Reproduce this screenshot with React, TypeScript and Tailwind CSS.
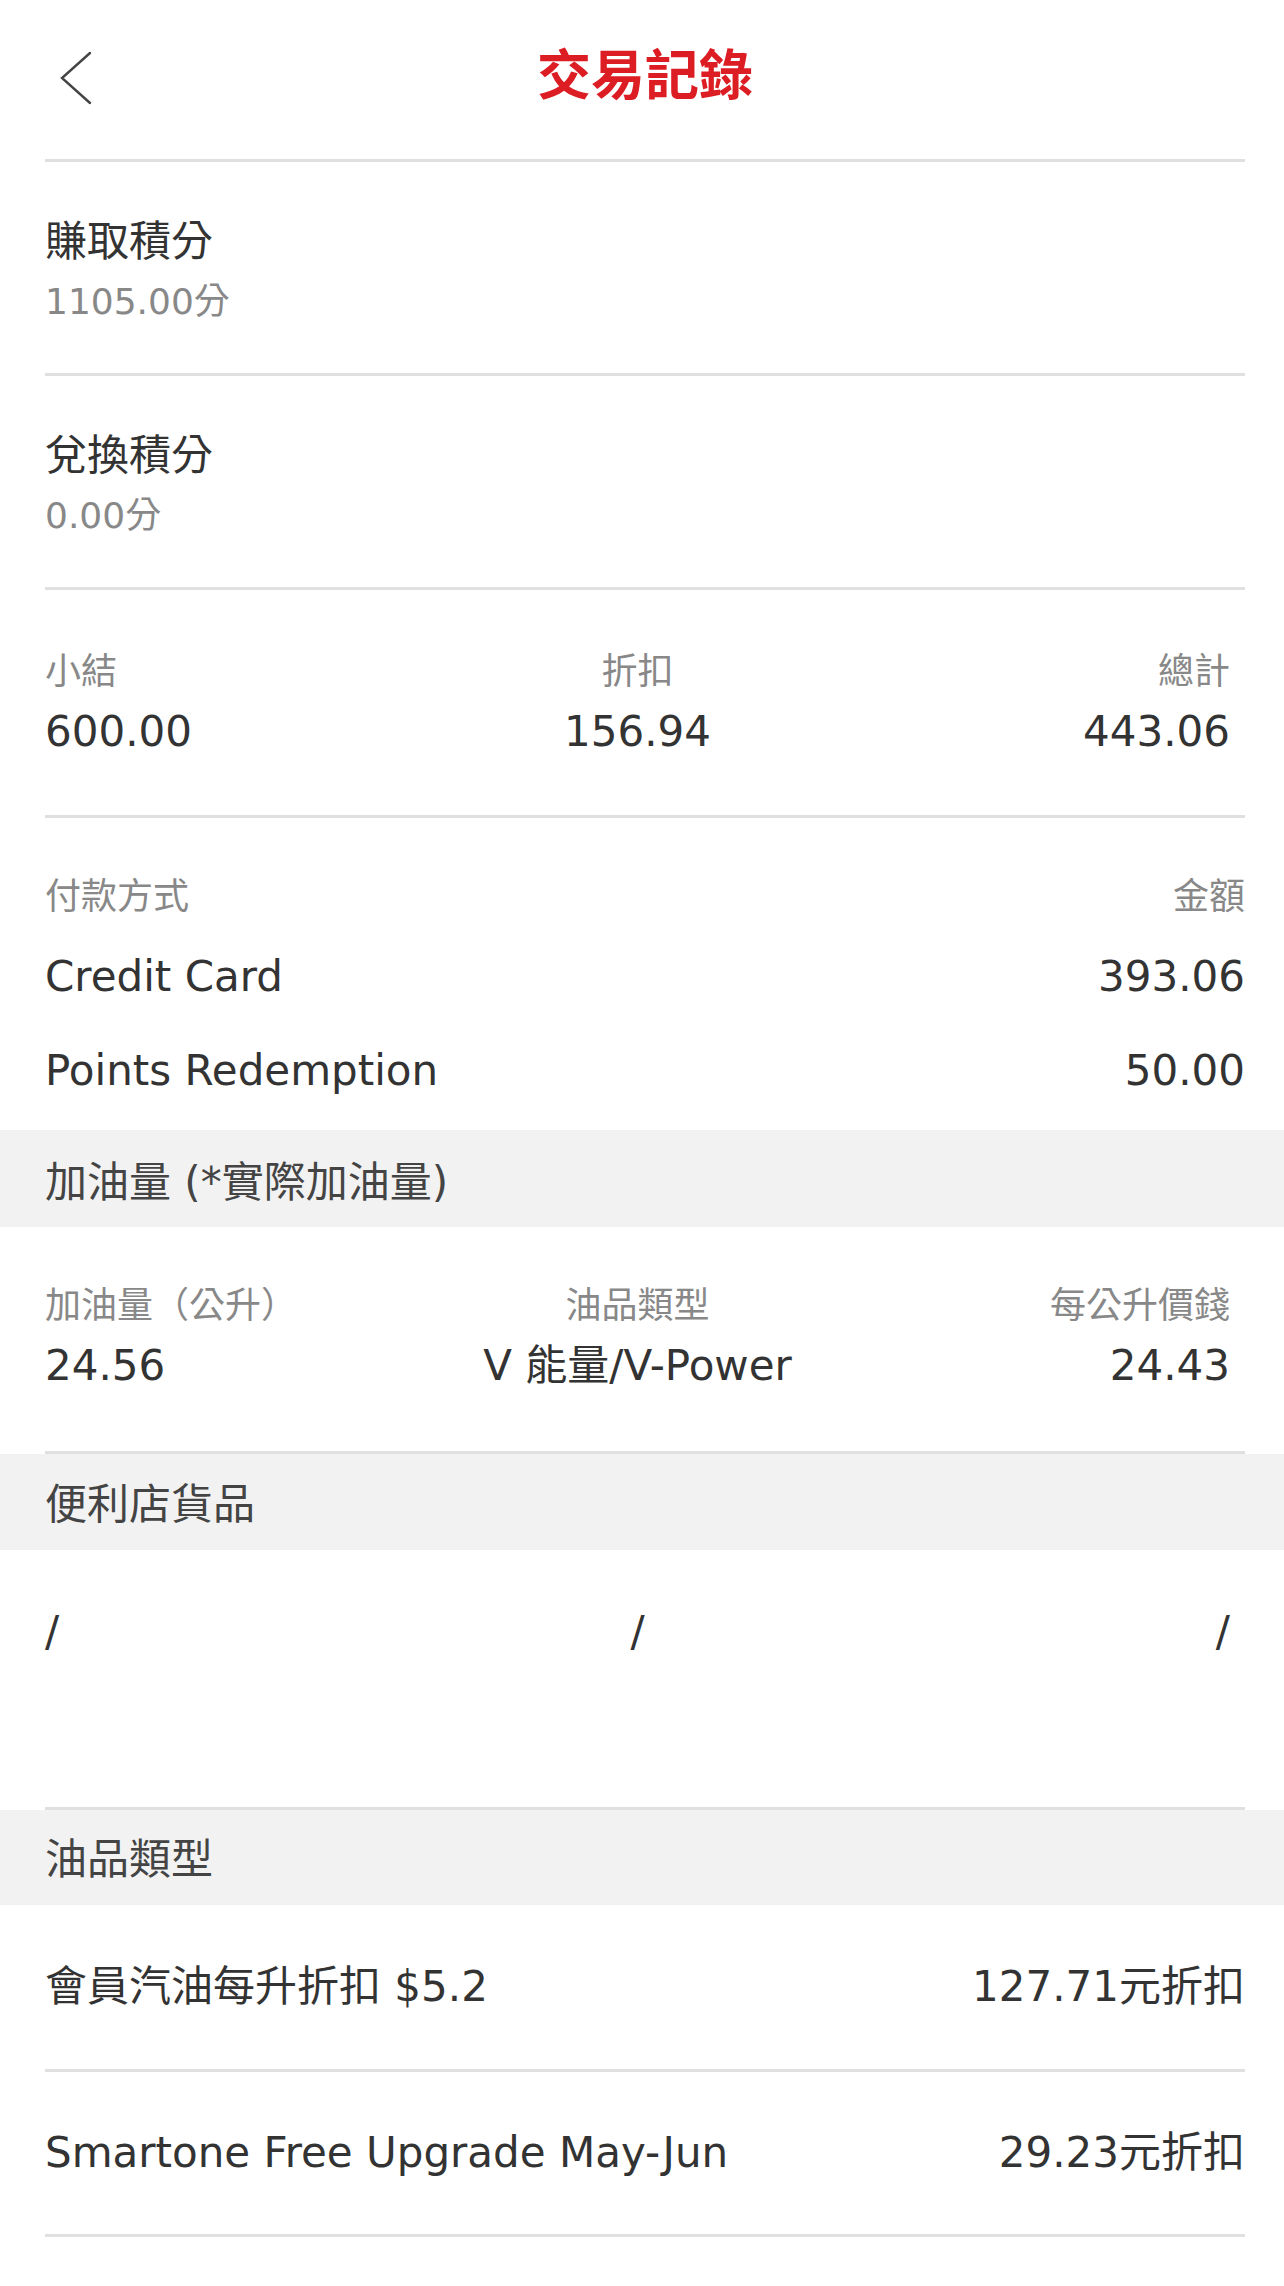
import type { ReactNode } from "react";

/* ---------- transaction record ----------
 * Plain receipt view: header, point totals, amount breakdown, payment
 * lines, fuel info and the discount list. Rows are separated by a light
 * 3px rule that is inset from both edges; section titles sit on a grey band.
 */

const FONT = "font-['DejaVu_Sans','Noto_Sans_CJK_TC',sans-serif]";

function Rule() {
  return <div className="ml-[45px] mr-[39px] h-[3px] bg-[#e0e0e0]" />;
}

function Band({ children, pt }: { children: ReactNode; pt: string }) {
  return (
    <div className={`bg-[#f2f2f2] px-[45px] ${pt}`}>
      <div className="text-[42px] leading-[60px] text-[#444]">{children}</div>
    </div>
  );
}

function Col({
  label,
  value,
  align,
}: {
  label?: string;
  value: string;
  align: "left" | "center" | "right";
}) {
  const a =
    align === "left" ? "text-left" : align === "center" ? "text-center" : "text-right";
  return (
    <div className={`${a} whitespace-nowrap`}>
      {label !== undefined && (
        <div className="text-[36px] leading-[60px] text-[#888]">{label}</div>
      )}
      <div className="text-[42px] leading-[60px] text-[#333]">{value}</div>
    </div>
  );
}

export default function App() {
  return (
    <div className={`${FONT} min-h-screen bg-white`}>
      {/* header */}
      <header className="grid h-[159px] grid-cols-[1fr_auto_1fr] items-center pb-[6px]">
        <div className="pl-[60px] pt-[2px]">
          <svg width="32" height="54" viewBox="0 0 32 54" fill="none">
            <polyline
              points="30,2 2,27 30,52"
              stroke="#444"
              strokeWidth="2.4"
              strokeLinecap="round"
              strokeLinejoin="miter"
            />
          </svg>
        </div>
        <h1 className="pl-[6px] text-[54px] font-bold leading-[64px] text-[#dd1d24]">
          交易記錄
        </h1>
        <div />
      </header>
      <Rule />

      {/* points */}
      <section className="ml-[45px] mr-[39px] border-b-[3px] border-[#e0e0e0] pb-[41px] pt-[50px]">
        <div className="text-[42px] leading-[60px] text-[#333]">賺取積分</div>
        <div className="text-[36px] leading-[60px] text-[#888]">1105.00分</div>
      </section>
      <section className="ml-[45px] mr-[39px] border-b-[3px] border-[#e0e0e0] pb-[41px] pt-[50px]">
        <div className="text-[42px] leading-[60px] text-[#333]">兌換積分</div>
        <div className="text-[36px] leading-[60px] text-[#888]">0.00分</div>
      </section>

      {/* totals */}
      <section className="ml-[45px] mr-[39px] border-b-[3px] border-[#e0e0e0] pb-[53px] pt-[52px]">
        <div className="grid grid-cols-3 pr-[15px]">
          <Col label="小結" value="600.00" align="left" />
          <Col label="折扣" value="156.94" align="center" />
          <Col label="總計" value="443.06" align="right" />
        </div>
      </section>

      {/* payment */}
      <section className="ml-[45px] mr-[39px] pb-[29px] pt-[49px]">
        <div className="flex justify-between text-[36px] leading-[60px] text-[#888]">
          <span>付款方式</span>
          <span>金額</span>
        </div>
        <div className="mt-[20px] flex justify-between text-[42px] leading-[60px] text-[#333]">
          <span>Credit Card</span>
          <span>393.06</span>
        </div>
        <div className="mt-[34px] flex justify-between text-[42px] leading-[60px] text-[#333]">
          <span>Points Redemption</span>
          <span>50.00</span>
        </div>
      </section>

      {/* fuel */}
      <Band pt="pt-[23px] h-[97px]">加油量 (*實際加油量)</Band>
      <section className="ml-[45px] mr-[39px] border-b-[3px] border-[#e0e0e0] pb-[55px] pt-[49px]">
        <div className="grid grid-cols-3 pr-[15px]">
          <Col label="加油量（公升）" value="24.56" align="left" />
          <Col label="油品類型" value="V 能量/V-Power" align="center" />
          <Col label="每公升價錢" value="24.43" align="right" />
        </div>
      </section>

      {/* convenience store */}
      <Band pt="pt-[21px] h-[96px]">便利店貨品</Band>
      <section className="ml-[45px] mr-[39px] border-b-[3px] border-[#e0e0e0] pb-[145px] pt-[52px]">
        <div className="grid grid-cols-3 pr-[15px]">
          <Col value="/" align="left" />
          <Col value="/" align="center" />
          <Col value="/" align="right" />
        </div>
      </section>

      {/* discounts */}
      <Band pt="pt-[20px] h-[95px]">油品類型</Band>
      <section className="ml-[45px] mr-[39px] flex justify-between border-b-[3px] border-[#e0e0e0] pb-[52px] pt-[52px] text-[42px] leading-[60px] text-[#333]">
        <span>會員汽油每升折扣 $5.2</span>
        <span>127.71元折扣</span>
      </section>
      <section className="ml-[45px] mr-[39px] flex justify-between border-b-[3px] border-[#e0e0e0] pb-[51px] pt-[51px] text-[42px] leading-[60px] text-[#333]">
        <span>Smartone Free Upgrade May-Jun</span>
        <span>29.23元折扣</span>
      </section>
    </div>
  );
}
